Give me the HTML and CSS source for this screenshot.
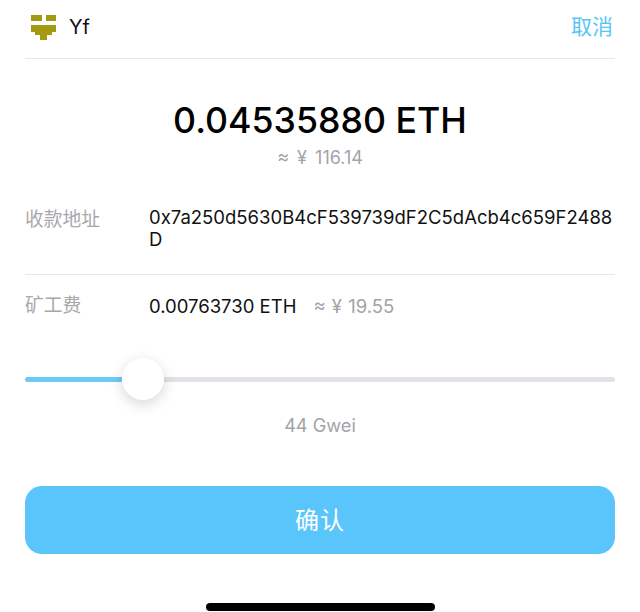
FILE: index.html
```
<!DOCTYPE html>
<html lang="zh">
<head>
<meta charset="utf-8">
<title>确认</title>
<link rel="stylesheet" href="styles.css">
</head>
<body>
<main class="page">
  <header class="top">
    <div class="token">
      <svg class="logo" width="25" height="26" viewBox="0 0 25 26" fill="#a39a12"><path d="M0 1h11v6H0zM15 1h10v6H15zM0 11h25v7h-4v3h-5v5H9v-5H4v-3H0z"/></svg>
      <span class="name">Yf</span>
    </div>
    <span class="cancel">取消</span>
  </header>
  <section class="amount">
    <div class="value">0.04535880 ETH</div>
    <div class="fiat">≈ ¥ 116.14</div>
  </section>
  <section class="row row-address">
    <div class="label">收款地址</div>
    <div class="address">0x7a250d5630B4cF539739dF2C5dAcb4c659F2488<br>D</div>
  </section>
  <section class="row row-fee">
    <div class="label">矿工费</div>
    <div class="fee">0.00763730 ETH</div>
    <div class="fee-fiat">≈ ¥ 19.55</div>
  </section>
  <div class="slider">
    <div class="fill"></div>
    <div class="thumb"></div>
    <div class="rest"></div>
  </div>
  <div class="gwei">44 Gwei</div>
  <button class="confirm">确认</button>
  <div class="home-wrap"><div class="home"></div></div>
</main>
</body>
</html>
```
FILE: styles.css
```
* { box-sizing: border-box; }
html, body { margin: 0; padding: 0; background: #fff; }
body { font-family: Inter, "Noto Sans CJK SC", sans-serif; overflow: hidden; }
.page { width: 640px; height: 612px; padding: 0 25px; display: flex; flex-direction: column; }
.top { height: 59px; border-bottom: 1px solid #e8e8ea; display: flex; align-items: center; justify-content: space-between; padding-bottom: 5px; }
.token { display: flex; align-items: center; gap: 13px; }
.logo { display: block; margin-left: 6px; }
.name { font-size: 20px; color: #111; }
.cancel { font-size: 21px; line-height: 26px; color: #5ac5f7; margin-right: 2px; margin-top: -4px; font-family: "Noto Sans CJK SC", sans-serif; }
.amount { text-align: center; padding-top: 38px; height: 137px; }
.value { font-size: 35.7px; line-height: 46px; color: #000; font-weight: 500; }
.fiat { font-size: 18px; line-height: 24px; color: #a3a3a8; margin-top: 3px; word-spacing: 3px; }
.row { display: flex; }
.label { width: 124px; flex: none; font-size: 18.75px; color: #a8a8ac; font-family: "Noto Sans CJK SC", sans-serif; line-height: 26px; margin-top: -2px; }
.row-address { height: 79px; border-bottom: 1px solid #e8e8ea; padding-top: 11px; }
.address { font-size: 18.5px; line-height: 21.5px; color: #111; white-space: nowrap; }
.row-fee { padding-top: 18px; height: 75px; align-items: flex-start; }
.fee { font-size: 18.5px; line-height: 26px; color: #111; }
.fee-fiat { font-size: 18.5px; line-height: 26px; color: #a3a3a8; margin-left: 17px; word-spacing: 1px; }
.slider { height: 42px; display: flex; align-items: center; margin-top: 8px; }
.fill { width: 97px; height: 5px; background: #6ccbf5; border-radius: 3px 0 0 3px; }
.thumb { width: 42px; height: 42px; flex: none; border-radius: 50%; background: #fff; box-shadow: 0 4px 14px rgba(0,0,0,.16); position: relative; }
.rest { flex: 1; height: 5px; background: #e1e1e7; border-radius: 0 3px 3px 0; }
.gwei { text-align: center; font-size: 18.2px; line-height: 24px; color: #a3a3a8; margin-top: 13px; }
.confirm { margin-top: 49px; height: 68px; flex: none; border: 0; border-radius: 17px; background: #5ac5fb; color: #fff; font-size: 24px; font-family: "Noto Sans CJK SC", sans-serif; letter-spacing: 1px; padding: 0 0 4px; }
.home-wrap { display: flex; justify-content: center; margin-top: 49px; }
.home { width: 229px; height: 8px; background: #000; border-radius: 4px; }
```
